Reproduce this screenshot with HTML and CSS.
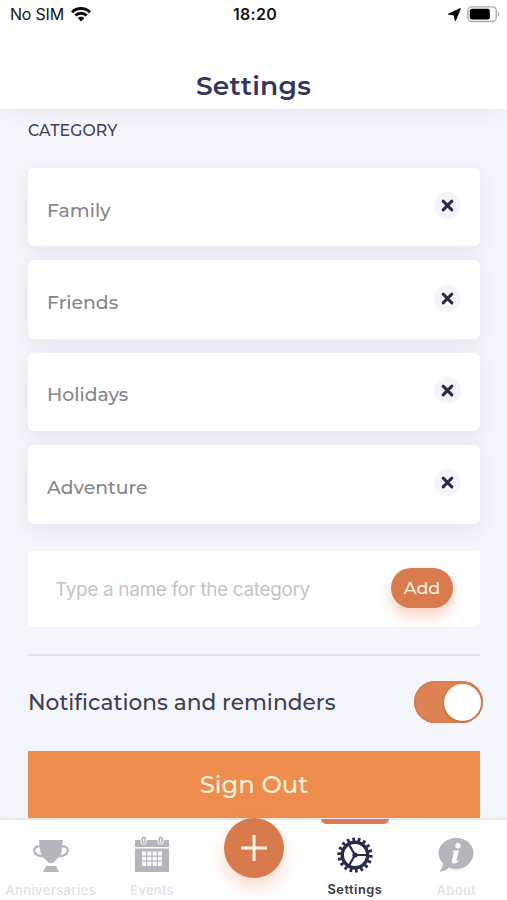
FILE: index.html
```html
<!DOCTYPE html>
<html lang="en">
<head>
<meta charset="utf-8">
<meta name="viewport" content="width=device-width, initial-scale=1">
<title>Settings</title>
<link rel="stylesheet" href="styles.css">
</head>
<body>
<div class="app">
  <header class="header">
    <div class="status">
      <div class="carrier"><span>No SIM</span>
        <svg width="20" height="15" viewBox="0 0 20 15" fill="none" stroke="#0b0b0b" stroke-width="2.9"><path d="M1 5.2C6 .3 14 .3 19 5.2M4.3 8.5c3.2-3.1 8.2-3.1 11.4 0"/><path d="M6.7 11c1.8-1.8 4.8-1.8 6.6 0L10 14.4z" fill="#0b0b0b" stroke="none"/></svg>
      </div>
      <div class="time">18:20</div>
      <div class="power">
        <svg width="13" height="13" viewBox="0 0 13 13"><path d="M12.200.8 7.400 12.300 6.300 6.900.8 6.100z" fill="#0b0b0b" stroke="#0b0b0b" stroke-width="1.300" stroke-linejoin="round"/></svg>
        <svg width="33" height="17" viewBox="0 0 33 17"><rect x=".9" y=".9" width="28.4" height="14.6" rx="4" fill="none" stroke="#aaa" stroke-width="1.4"/><rect x="2.8" y="2.8" width="20" height="10.8" rx="2" fill="#000"/><path d="M31 5.8c1.5.6 1.5 4.2 0 4.8z" fill="#999"/></svg>
      </div>
    </div>
    <h1>Settings</h1>
  </header>
  <main class="content">
    <h2>CATEGORY</h2>
    <ul class="categories">
      <li class="card"><span>Family</span><button class="remove" aria-label="Remove Family"><svg viewBox="0 0 12 12"><path d="m2 2 8 8m0-8-8 8"/></svg></button></li>
      <li class="card"><span>Friends</span><button class="remove" aria-label="Remove Friends"><svg viewBox="0 0 12 12"><path d="m2 2 8 8m0-8-8 8"/></svg></button></li>
      <li class="card"><span>Holidays</span><button class="remove" aria-label="Remove Holidays"><svg viewBox="0 0 12 12"><path d="m2 2 8 8m0-8-8 8"/></svg></button></li>
      <li class="card"><span>Adventure</span><button class="remove" aria-label="Remove Adventure"><svg viewBox="0 0 12 12"><path d="m2 2 8 8m0-8-8 8"/></svg></button></li>
    </ul>
    <div class="new-category"><span class="placeholder">Type a name for the category</span><button class="add">Add</button></div>
    <div class="notify"><span>Notifications and reminders</span><span class="toggle"></span></div>
    <button class="signout">Sign Out</button>
  </main>
  <nav class="tabs">
    <a class="tab"><svg width="36" height="34" viewBox="0 0 36 34"><path d="M6 1h24l-1.500 12C27.500 18 22 21.500 20 24h-4c-2-2.500-7.500-6-8.500-11z" fill="#b4b5bd"/><path d="M7 7.500C3 7 .8 9 1.300 12c.6 3.300 4.500 5.200 9 5.500M29 7.500c4-.5 6.200 1.500 5.700 4.500-.6 3.300-4.500 5.200-9 5.500" fill="none" stroke="#b4b5bd" stroke-width="2.200"/><path d="M13 27h10l3 6H10z" fill="#b4b5bd"/></svg><span class="anniv">Anniversaries</span></a>
    <a class="tab"><svg width="36" height="38" viewBox="0 0 36 38"><path d="M1 5h34v7H1zM1 13.500h34V37H1z" fill="#b4b5bd"/><g fill="#b4b5bd" stroke="#fff" stroke-width="1"><rect x="7" y="1" width="5.400" height="8.400" rx="2.700"/><rect x="24" y="1" width="5.400" height="8.400" rx="2.700"/></g><path d="M9.700 3.500v4M26.700 3.500v4" stroke="#fff" stroke-width="1.300"/><path d="M8 16.500h20V31H8z" fill="#fff"/><g fill="#b4b5bd"><path d="M12 16.500h1.200V31H12zM17.400 16.500h1.200V31h-1.200zM22.800 16.500H24V31h-1.200zM8 20.600h20v1.200H8zM8 25.600h20v1.200H8z"/></g></svg><span class="events">Events</span></a>
    <a class="tab compose" aria-label="Add event"><span class="fab"><svg width="28" height="28" viewBox="0 0 28 28"><path d="M14 1v26M1 14h26" stroke="#fff5ec" stroke-width="3"/></svg></span></a>
    <a class="tab active"><svg width="36" height="36" viewBox="0 0 36 36" fill="none" stroke="#282b4c"><circle cx="18" cy="18" r="15.800" stroke-width="3.600" pathLength="180" stroke-dasharray="5 5"/><circle cx="18" cy="18" r="12.700" stroke-width="3.400"/><path d="M18 18h12M18 18 12 7.600M18 18l-6 10.400" stroke-width="2.200"/><circle cx="18" cy="18" r="2.600" fill="#282b4c" stroke="none"/></svg><span class="settings">Settings</span></a>
    <a class="tab"><svg width="36" height="36" viewBox="0 0 36 36"><path d="M18.500 1C28 1 35.500 7.500 35.500 16S28 32 18.500 32c-3 0-5.500-.5-7.500-1.500C8.500 33 5 34.500 1.500 34.500 3.500 32 5 29 5 26.500 2.300 23.800.5 20 .5 16 .5 7.500 9 1 18.500 1z" fill="#b4b5bd"/><circle cx="20" cy="8.800" r="2.700" fill="#fff"/><path d="m14.500 14 6.500-1-2.500 10c-.3 1.300.6 1.400 2.700-.8-.9 3-2.900 4.300-4.900 4.300-2.100 0-2.800-1.300-2.300-3.500l1.700-6.500c.2-1-.3-1.400-1.500-1.400z" fill="#fff"/></svg><span class="about">About</span></a>
  </nav>
</div>
</body>
</html>
```
FILE: styles.css
```css
* { box-sizing: border-box; }
body { margin: 0; font-family: Montserrat, Inter, sans-serif; color: #34364e; }
button { border: 0; padding: 0; font-family: inherit; }
h1, h2, ul { margin: 0; padding: 0; }
.app { width: 507px; height: 900px; display: flex; flex-direction: column; overflow: hidden; background: #f4f6fb; }
.header { flex: 0 0 109px; background: #fff; box-shadow: 0 4px 18px #3b30400f; }
.status { height: 29px; padding: 0 7px 0 10px; display: grid; grid-template-columns: 1fr auto 1fr; align-items: center; color: #151515; font: 16px/29px Inter, sans-serif; }
.carrier { display: flex; align-items: center; gap: 7px; letter-spacing: -.2px; }
.time { font-weight: 600; letter-spacing: .3px; }
.power { display: flex; justify-content: flex-end; align-items: center; gap: 6px; }
h1 { margin-top: 39px; text-align: center; font-size: 26.500px; line-height: 36px; font-weight: 600; color: #34365b; letter-spacing: .25px; }
.content { flex: 1; min-height: 0; padding: 0 27px 0 28px; display: flex; flex-direction: column; }
h2 { margin-top: 12px; font-size: 15.700px; line-height: 20px; font-weight: 500; letter-spacing: .15px; color: #3d3f54; }
.categories { margin-top: 27px; list-style: none; display: grid; gap: 14px; }
.card { height: 78.400px; padding: 0 19px; border-radius: 6px; background: #fff; box-shadow: 0 5px 18px #44386017; display: flex; align-items: center; justify-content: space-between; font-size: 18.800px; font-weight: 500; color: #85868b; }
.card > span { padding-top: 6px; }
.remove { width: 27px; height: 27px; margin-bottom: 3px; border-radius: 50%; background: #f4f5fa; display: grid; place-items: center; }
.remove svg { width: 13px; height: 13px; fill: none; stroke: #282b49; stroke-width: 2.800; stroke-linecap: round; }
.new-category { margin-top: 27px; height: 76px; flex: none; padding: 0 27px; border-radius: 5px; background: #fff; display: flex; align-items: center; justify-content: space-between; }
.placeholder { padding-top: 2px; color: #c4c4c7; font: 19px/24px Inter, sans-serif; letter-spacing: -.36px; }
.add { width: 62px; height: 40px; margin-bottom: 1px; border-radius: 20px; background: #d97b4d; color: #fff2e5; font-size: 17.500px; line-height: 38px; font-weight: 500; box-shadow: 0 8px 14px #e9794755; }
.notify { margin: 27px -3px 0 0; height: 97px; flex: none; display: flex; align-items: center; justify-content: space-between; position: relative; font-size: 21.700px; font-weight: 500; color: #3d4053; }
.notify::before { content: ""; position: absolute; top: 0; left: 0; right: 3px; height: 2px; background: #e2e3e8; }
.toggle { width: 69px; height: 42px; border-radius: 21px; background: #de8454; box-shadow: inset 0 0 0 2px #d67c4e; display: flex; align-items: center; justify-content: flex-end; padding-right: 2px; }
.toggle::after { content: ""; width: 37px; height: 37px; border-radius: 50%; background: #fff; box-shadow: -1px 1px 3px #9b522b70; }
.signout { flex: none; height: 67px; background: #ef8d4e; color: #fff3df; font-size: 24.300px; font-weight: 500; }
.tabs { flex: 0 0 82px; border-top: 2px solid #e8e8ec; background: #fff; display: grid; grid-template-columns: repeat(5, 1fr); }
.tab { display: flex; flex-direction: column; align-items: center; justify-content: flex-end; font: 500 13px/16px Inter, sans-serif; color: #e0e0e5; padding-bottom: 2px; position: relative; }
.tab > svg { margin-bottom: 9px; }
.anniv { letter-spacing: .4px; }
.events { letter-spacing: .3px; }
.settings { letter-spacing: .5px; font-weight: 600; font-size: 12.800px; }
.about { letter-spacing: .4px; }
.active { color: #373944; }
.active::before { content: ""; position: absolute; top: -1px; width: 68px; height: 5px; border-radius: 0 0 6px 6px; background: #d97b55; }
.compose { justify-content: flex-start; }
.fab { width: 60px; height: 60px; margin: -2px 0 0 1px; border-radius: 50%; background: #d97a4c; display: grid; place-items: center; box-shadow: 0 9px 17px #e9794745; }
```
